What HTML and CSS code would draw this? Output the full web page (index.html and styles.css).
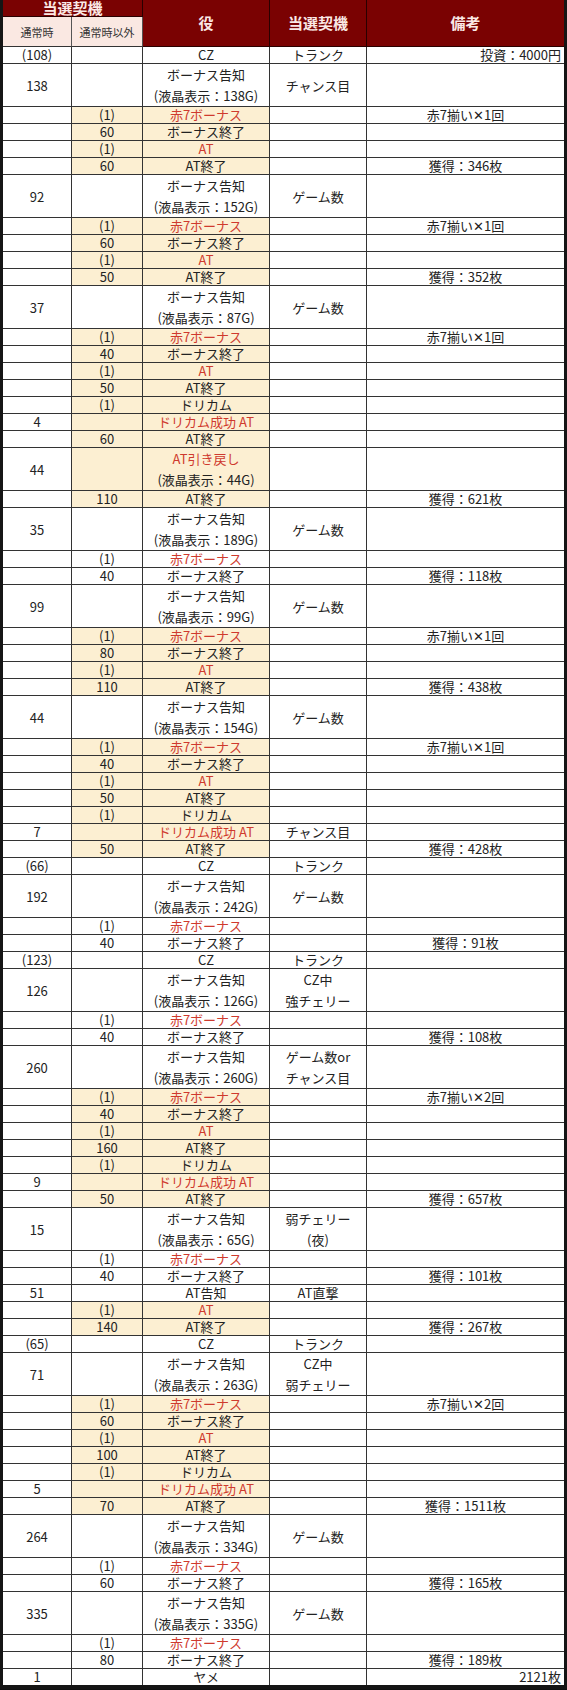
FILE: index.html
```html
<!DOCTYPE html>
<html lang="ja">
<head>
<meta charset="utf-8">
<link rel="stylesheet" href="styles.css">
</head>
<body>
<table class="log">
<colgroup><col class="c1"><col class="c2"><col class="c3"><col class="c4"><col class="c5"></colgroup>
<thead>
<tr class="h1"><th colspan="2" class="top">当選契機</th><th rowspan="2">役</th><th rowspan="2">当選契機</th><th rowspan="2">備考</th></tr>
<tr class="h2"><th class="sub">通常時</th><th class="sub">通常時以外</th></tr>
</thead>
<tbody>
<tr><td>(108)</td><td></td><td>CZ</td><td>トランク</td><td class="rt">投資：4000円</td></tr>
<tr class="d"><td>138</td><td></td><td>ボーナス告知<br>(液晶表示：138G)</td><td>チャンス目</td><td></td></tr>
<tr class="y"><td></td><td>(1)</td><td class="red">赤7ボーナス</td><td></td><td>赤7揃い✕1回</td></tr>
<tr class="y"><td></td><td>60</td><td>ボーナス終了</td><td></td><td></td></tr>
<tr class="y"><td></td><td>(1)</td><td class="red">AT</td><td></td><td></td></tr>
<tr class="y"><td></td><td>60</td><td>AT終了</td><td></td><td>獲得：346枚</td></tr>
<tr class="d"><td>92</td><td></td><td>ボーナス告知<br>(液晶表示：152G)</td><td>ゲーム数</td><td></td></tr>
<tr class="y"><td></td><td>(1)</td><td class="red">赤7ボーナス</td><td></td><td>赤7揃い✕1回</td></tr>
<tr class="y"><td></td><td>60</td><td>ボーナス終了</td><td></td><td></td></tr>
<tr class="y"><td></td><td>(1)</td><td class="red">AT</td><td></td><td></td></tr>
<tr class="y"><td></td><td>50</td><td>AT終了</td><td></td><td>獲得：352枚</td></tr>
<tr class="d"><td>37</td><td></td><td>ボーナス告知<br>(液晶表示：87G)</td><td>ゲーム数</td><td></td></tr>
<tr class="y"><td></td><td>(1)</td><td class="red">赤7ボーナス</td><td></td><td>赤7揃い✕1回</td></tr>
<tr class="y"><td></td><td>40</td><td>ボーナス終了</td><td></td><td></td></tr>
<tr class="y"><td></td><td>(1)</td><td class="red">AT</td><td></td><td></td></tr>
<tr class="y"><td></td><td>50</td><td>AT終了</td><td></td><td></td></tr>
<tr class="y"><td></td><td>(1)</td><td>ドリカム</td><td></td><td></td></tr>
<tr class="y"><td>4</td><td></td><td class="red">ドリカム成功 AT</td><td></td><td></td></tr>
<tr class="y"><td></td><td>60</td><td>AT終了</td><td></td><td></td></tr>
<tr class="y d"><td>44</td><td></td><td><span class="red">AT引き戻し</span><br>(液晶表示：44G)</td><td></td><td></td></tr>
<tr class="y"><td></td><td>110</td><td>AT終了</td><td></td><td>獲得：621枚</td></tr>
<tr class="d"><td>35</td><td></td><td>ボーナス告知<br>(液晶表示：189G)</td><td>ゲーム数</td><td></td></tr>
<tr><td></td><td>(1)</td><td class="red">赤7ボーナス</td><td></td><td></td></tr>
<tr><td></td><td>40</td><td>ボーナス終了</td><td></td><td>獲得：118枚</td></tr>
<tr class="d"><td>99</td><td></td><td>ボーナス告知<br>(液晶表示：99G)</td><td>ゲーム数</td><td></td></tr>
<tr class="y"><td></td><td>(1)</td><td class="red">赤7ボーナス</td><td></td><td>赤7揃い✕1回</td></tr>
<tr class="y"><td></td><td>80</td><td>ボーナス終了</td><td></td><td></td></tr>
<tr class="y"><td></td><td>(1)</td><td class="red">AT</td><td></td><td></td></tr>
<tr class="y"><td></td><td>110</td><td>AT終了</td><td></td><td>獲得：438枚</td></tr>
<tr class="d"><td>44</td><td></td><td>ボーナス告知<br>(液晶表示：154G)</td><td>ゲーム数</td><td></td></tr>
<tr class="y"><td></td><td>(1)</td><td class="red">赤7ボーナス</td><td></td><td>赤7揃い✕1回</td></tr>
<tr class="y"><td></td><td>40</td><td>ボーナス終了</td><td></td><td></td></tr>
<tr class="y"><td></td><td>(1)</td><td class="red">AT</td><td></td><td></td></tr>
<tr class="y"><td></td><td>50</td><td>AT終了</td><td></td><td></td></tr>
<tr class="y"><td></td><td>(1)</td><td>ドリカム</td><td></td><td></td></tr>
<tr class="y"><td>7</td><td></td><td class="red">ドリカム成功 AT</td><td>チャンス目</td><td></td></tr>
<tr class="y"><td></td><td>50</td><td>AT終了</td><td></td><td>獲得：428枚</td></tr>
<tr><td>(66)</td><td></td><td>CZ</td><td>トランク</td><td></td></tr>
<tr class="d"><td>192</td><td></td><td>ボーナス告知<br>(液晶表示：242G)</td><td>ゲーム数</td><td></td></tr>
<tr><td></td><td>(1)</td><td class="red">赤7ボーナス</td><td></td><td></td></tr>
<tr><td></td><td>40</td><td>ボーナス終了</td><td></td><td>獲得：91枚</td></tr>
<tr><td>(123)</td><td></td><td>CZ</td><td>トランク</td><td></td></tr>
<tr class="d"><td>126</td><td></td><td>ボーナス告知<br>(液晶表示：126G)</td><td>CZ中<br>強チェリー</td><td></td></tr>
<tr><td></td><td>(1)</td><td class="red">赤7ボーナス</td><td></td><td></td></tr>
<tr><td></td><td>40</td><td>ボーナス終了</td><td></td><td>獲得：108枚</td></tr>
<tr class="d"><td>260</td><td></td><td>ボーナス告知<br>(液晶表示：260G)</td><td>ゲーム数or<br>チャンス目</td><td></td></tr>
<tr class="y"><td></td><td>(1)</td><td class="red">赤7ボーナス</td><td></td><td>赤7揃い✕2回</td></tr>
<tr class="y"><td></td><td>40</td><td>ボーナス終了</td><td></td><td></td></tr>
<tr class="y"><td></td><td>(1)</td><td class="red">AT</td><td></td><td></td></tr>
<tr class="y"><td></td><td>160</td><td>AT終了</td><td></td><td></td></tr>
<tr class="y"><td></td><td>(1)</td><td>ドリカム</td><td></td><td></td></tr>
<tr class="y"><td>9</td><td></td><td class="red">ドリカム成功 AT</td><td></td><td></td></tr>
<tr class="y"><td></td><td>50</td><td>AT終了</td><td></td><td>獲得：657枚</td></tr>
<tr class="d"><td>15</td><td></td><td>ボーナス告知<br>(液晶表示：65G)</td><td>弱チェリー<br>(夜)</td><td></td></tr>
<tr><td></td><td>(1)</td><td class="red">赤7ボーナス</td><td></td><td></td></tr>
<tr><td></td><td>40</td><td>ボーナス終了</td><td></td><td>獲得：101枚</td></tr>
<tr><td>51</td><td></td><td>AT告知</td><td>AT直撃</td><td></td></tr>
<tr class="y"><td></td><td>(1)</td><td class="red">AT</td><td></td><td></td></tr>
<tr class="y"><td></td><td>140</td><td>AT終了</td><td></td><td>獲得：267枚</td></tr>
<tr><td>(65)</td><td></td><td>CZ</td><td>トランク</td><td></td></tr>
<tr class="d"><td>71</td><td></td><td>ボーナス告知<br>(液晶表示：263G)</td><td>CZ中<br>弱チェリー</td><td></td></tr>
<tr class="y"><td></td><td>(1)</td><td class="red">赤7ボーナス</td><td></td><td>赤7揃い✕2回</td></tr>
<tr class="y"><td></td><td>60</td><td>ボーナス終了</td><td></td><td></td></tr>
<tr class="y"><td></td><td>(1)</td><td class="red">AT</td><td></td><td></td></tr>
<tr class="y"><td></td><td>100</td><td>AT終了</td><td></td><td></td></tr>
<tr class="y"><td></td><td>(1)</td><td>ドリカム</td><td></td><td></td></tr>
<tr class="y"><td>5</td><td></td><td class="red">ドリカム成功 AT</td><td></td><td></td></tr>
<tr class="y"><td></td><td>70</td><td>AT終了</td><td></td><td>獲得：1511枚</td></tr>
<tr class="d"><td>264</td><td></td><td>ボーナス告知<br>(液晶表示：334G)</td><td>ゲーム数</td><td></td></tr>
<tr><td></td><td>(1)</td><td class="red">赤7ボーナス</td><td></td><td></td></tr>
<tr><td></td><td>60</td><td>ボーナス終了</td><td></td><td>獲得：165枚</td></tr>
<tr class="d"><td>335</td><td></td><td>ボーナス告知<br>(液晶表示：335G)</td><td>ゲーム数</td><td></td></tr>
<tr><td></td><td>(1)</td><td class="red">赤7ボーナス</td><td></td><td></td></tr>
<tr><td></td><td>80</td><td>ボーナス終了</td><td></td><td>獲得：189枚</td></tr>
<tr><td>1</td><td></td><td>ヤメ</td><td></td><td class="rt">2121枚</td></tr>
</tbody>
</table>
</body>
</html>
```
FILE: styles.css
```css
html, body {
  margin: 0;
  padding: 0;
  background: #111;
}
.log {
  width: 567px;
  border-collapse: separate;
  border-spacing: 0;
  table-layout: fixed;
  font-family: "Noto Sans CJK JP", "Noto Sans", sans-serif;
  font-size: 13px;
  color: #222;
  background: #fff;
  border-left: 3px solid #151515;
  border-right: 3px solid #151515;
  border-bottom: 4px solid #151515;
}
.c1 { width: 69px; }
.c2 { width: 71px; }
.c3 { width: 127px; }
.c4 { width: 97px; }
.c5 { width: auto; }

.log th {
  background: #7a0202;
  color: #fbe9e6;
  font-weight: bold;
  font-size: 15px;
  padding: 0;
  border-right: 1px solid #2a0000;
  border-bottom: 1px solid #2a0000;
  line-height: 16px;
}
.log th:last-child { border-right: none; }
.h1 th { height: 17px; }
.h1 th.top { height: 16px; font-size: 15px; line-height: 16px; vertical-align: top; }
.h2 th { height: 29px; }
.log th.sub {
  background: #fae8e2;
  color: #333;
  font-weight: normal;
  font-size: 11px;
  border-right: 1px solid #555;
  border-bottom: 1px solid #333;
}

.log td {
  height: 16px;
  padding: 0 2px;
  line-height: 16px;
  text-align: center;
  white-space: nowrap;
  border-right: 1px solid #333;
  border-bottom: 1px solid #333;
}
.log td:last-child { border-right: none; }
.log tr:last-child td { border-bottom: none; }
.log tr.d td { height: 42px; line-height: 21px; }
.log tr.y td:nth-child(2),
.log tr.y td:nth-child(3) { background: #fcefd2; }
.log td.rt { text-align: right; padding-right: 3px; }
.red { color: #cf3a2e; }
```
